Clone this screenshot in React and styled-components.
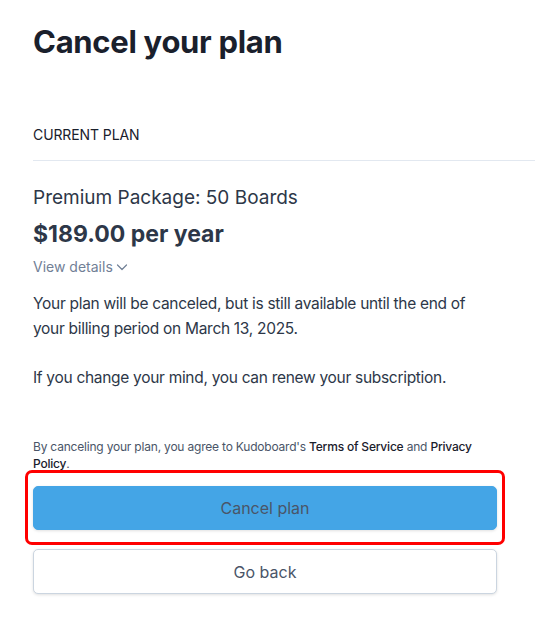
import React from 'react'
import styled, { createGlobalStyle } from 'styled-components'

const GlobalStyle = createGlobalStyle`
  body {
    margin: 0;
    background: #ffffff;
    font-family: Inter, "Noto Sans", "Liberation Sans", sans-serif;
    color: #2d3748;
  }
`

const App = () => {
    return (
        <Page>
            <GlobalStyle />
            <Title>Cancel your plan</Title>

            <SectionHead>Current plan</SectionHead>

            <Content>
                <PlanName>Premium Package: 50 Boards</PlanName>
                <Price>$189.00 per year</Price>
                <DetailsToggle>
                    View details
                    <svg width="12" height="12" viewBox="0 0 12 12" fill="none">
                        <path d="M1.5 4l4.5 4.5L10.5 4" stroke="#718096" strokeWidth="1.2" strokeLinecap="round" strokeLinejoin="round" />
                    </svg>
                </DetailsToggle>

                <Text>
                    Your plan will be canceled, but is still available until the end of
                    your billing period on March 13, 2025.
                </Text>
                <Text>If you change your mind, you can renew your subscription.</Text>

                <Legal>
                    By canceling your plan, you agree to Kudoboard's <strong>Terms of Service</strong> and <strong>Privacy Policy</strong>.
                </Legal>

                <Highlight>
                    <Button primary>Cancel plan</Button>
                </Highlight>
                <Button>Go back</Button>
            </Content>
        </Page>
    )
}

export default App


const Page = styled.div`
    padding: 22px 0 40px 33px;
`

const Title = styled.h1`
    margin: 0;
    font-size: 31px;
    line-height: 40px;
    font-weight: 700;
    color: #1a202c;
    letter-spacing: -0.3px;
`

const SectionHead = styled.div`
    margin-top: 63px;
    padding-bottom: 15px;
    border-bottom: 1px solid #e2e8f0;
    font-size: 14px;
    line-height: 20px;
    letter-spacing: -0.1px;
    text-transform: uppercase;
    color: #1a202c;
`

const Content = styled.div`
    width: 464px;
    padding-top: 24px;
`

const PlanName = styled.div`
    font-size: 19px;
    line-height: 26px;
    color: #2d3748;
`

const Price = styled.div`
    margin-top: 8px;
    font-size: 23px;
    line-height: 30px;
    font-weight: 700;
    color: #2d3748;
`

const DetailsToggle = styled.div`
    margin-top: 8px;
    display: flex;
    align-items: center;
    gap: 3px;
    font-size: 14px;
    line-height: 20px;
    color: #718096;
`

const Text = styled.p`
    margin: 14px 0 0;
    font-size: 15.5px;
    line-height: 25px;
    letter-spacing: -0.3px;
    color: #2d3748;

    & + & {
        margin-top: 24px;
    }
`

const Legal = styled.p`
    margin: 48px 0 0;
    font-size: 12px;
    line-height: 17px;
    letter-spacing: -0.2px;
    color: #4a5568;

    strong {
        font-weight: 500;
        color: #1a202c;
    }
`

const Highlight = styled.div`
    margin: -2px -8px 4px;
    padding: 13px 5px 12px;
    border: 3px solid #ff0000;
    border-radius: 7px;
`

const Button = styled.button`
    display: block;
    width: 100%;
    height: ${p => (p.primary ? '44px' : '45px')};
    border-radius: 5px;
    font-family: inherit;
    font-size: 16px;
    color: #4a5568;
    cursor: pointer;
    background: ${p => (p.primary ? '#44a5e6' : '#ffffff')};
    border: 1px solid ${p => (p.primary ? '#44a5e6' : '#cbd5e0')};
    box-shadow: 0 1px 3px rgba(0, 0, 0, 0.12);
`
